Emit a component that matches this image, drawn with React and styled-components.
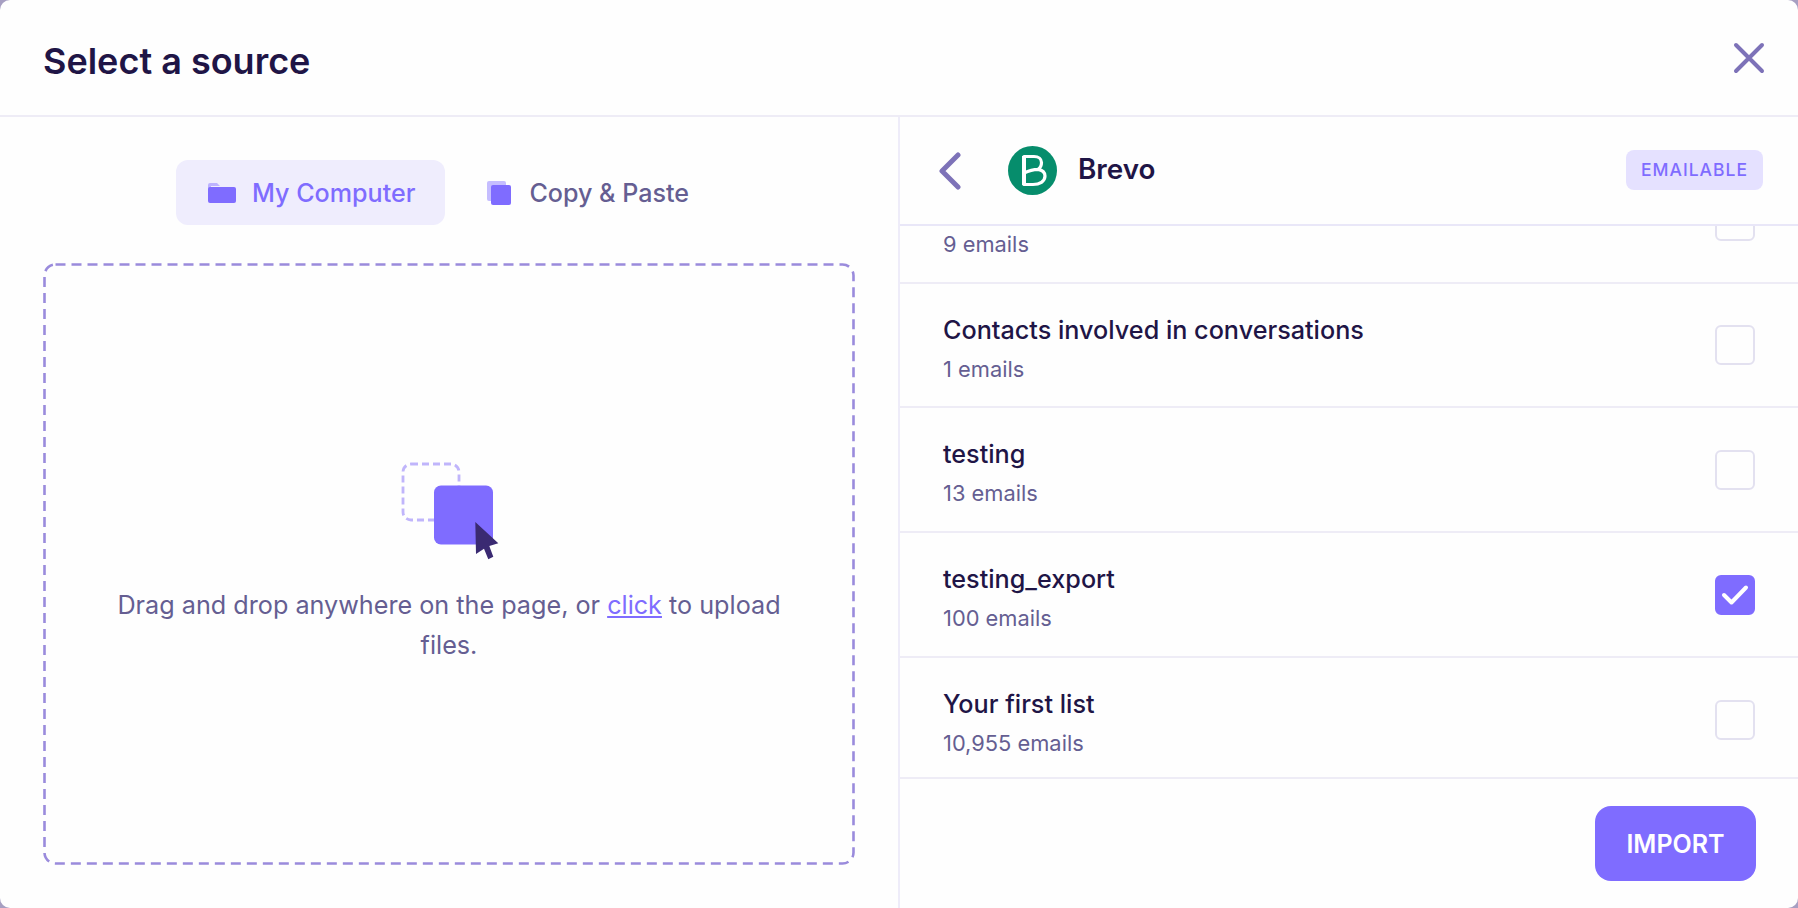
import styled, { createGlobalStyle } from 'styled-components';

const GlobalStyle = createGlobalStyle`
  html, body {
    margin: 0;
    padding: 0;
    background: #a79fc2;
  }
  * { box-sizing: border-box; }
`;

const lists = [
  { name: '\u00a0', count: '9 emails', height: 125, offset: -67 },
  { name: 'Contacts involved in conversations', count: '1 emails', height: 124 },
  { name: 'testing', count: '13 emails', height: 125 },
  { name: 'testing_export', count: '100 emails', height: 125, checked: true },
  { name: 'Your first list', count: '10,955 emails', height: 125 },
];

const Modal = styled.div`
  width: 1798px;
  height: 908px;
  display: flex;
  flex-direction: column;
  overflow: hidden;
  border-radius: 10px;
  background: #fefefe;
  font-family: Inter, "Liberation Sans", sans-serif;
  color: #1f1546;
`;

const Header = styled.header`
  height: 117px;
  flex: none;
  display: flex;
  align-items: center;
  justify-content: space-between;
  padding: 0 33px 0 43px;
  border-bottom: 2px solid #eeecf6;
`;

const Title = styled.h1`
  margin: 7px 0 0;
  font-size: 36px;
  font-weight: 600;
  line-height: 1;
`;

const CloseButton = styled.button`
  display: flex;
  padding: 0;
  border: 0;
  background: none;
`;

const Body = styled.div`
  flex: 1;
  min-height: 0;
  display: grid;
  grid-template-columns: 900px 1fr;
`;

const SourcePane = styled.section`
  display: flex;
  flex-direction: column;
  padding: 43px;
  border-right: 2px solid #eeecf9;
`;

const Tabs = styled.div`
  display: flex;
  justify-content: center;
  gap: 10px;
  height: 65px;
  flex: none;
  margin-bottom: 38px;
  padding-right: 3px;
`;

const Tab = styled.div`
  display: flex;
  align-items: center;
  gap: ${(p) => (p.$active ? '16px' : '18px')};
  padding: 0 30px 0 32px;
  border-radius: 12px;
  background: ${(p) => (p.$active ? '#efedfd' : 'transparent')};
  color: ${(p) => (p.$active ? '#7f6cff' : '#655e92')};
  font-size: 25.1px;
  font-weight: 500;
`;

const DropZone = styled.div`
  position: relative;
  flex: 1;
  display: flex;
  flex-direction: column;
  align-items: center;
  padding-top: 197px;
`;

const DashedFrame = styled.svg`
  position: absolute;
  inset: 0;
  width: 100%;
  height: 100%;
`;

const IconSlot = styled.div`
  display: flex;
  margin-left: 1px;
`;

const DropText = styled.p`
  margin: 25px 0 0;
  width: 700px;
  color: #655e92;
  font-size: 25.2px;
  line-height: 40px;
  text-align: center;
`;

const ClickLink = styled.a`
  color: #7f6cff;
  text-decoration: underline;
`;

const ListPane = styled.section`
  display: flex;
  flex-direction: column;
  min-height: 0;
`;

const ProviderBar = styled.div`
  height: 109px;
  flex: none;
  display: flex;
  align-items: center;
  padding: 0 35px 0 38px;
  border-bottom: 2px solid #e9e7f8;
`;

const BackButton = styled.button`
  display: flex;
  padding: 0;
  border: 0;
  background: none;
  margin-right: 46px;
`;

const ProviderName = styled.div`
  margin: 0 0 3px 21px;
  font-size: 27.8px;
  font-weight: 600;
`;

const Badge = styled.div`
  margin: 0 0 2px auto;
  width: 137px;
  height: 40px;
  display: flex;
  align-items: center;
  justify-content: center;
  border-radius: 8px;
  background: #e5e1ff;
  color: #7f6cff;
  font-size: 17.5px;
  font-weight: 500;
  letter-spacing: 1px;
`;

const ListScroll = styled.div`
  flex: 1;
  min-height: 0;
  overflow: hidden;
`;

const Row = styled.div`
  height: ${(p) => p.$height}px;
  margin-top: ${(p) => p.$offset || 0}px;
  display: flex;
  align-items: center;
  justify-content: space-between;
  padding: 0 43px;
  border-bottom: 2px solid #eeecf6;
`;

const RowText = styled.div`
  display: flex;
  flex-direction: column;
  gap: 8px;
  padding-top: 7px;
`;

const RowName = styled.div`
  font-size: 25.2px;
  font-weight: 500;
  line-height: 32px;
`;

const RowCount = styled.div`
  color: #655e92;
  font-size: 21.85px;
  line-height: 30px;
`;

const Checkbox = styled.div`
  width: 40px;
  height: 40px;
  flex: none;
  display: flex;
  align-items: center;
  justify-content: center;
  border-radius: 6px;
  border: 2px solid ${(p) => (p.$checked ? '#7f6cff' : '#e3e1f0')};
  background: ${(p) => (p.$checked ? '#7f6cff' : 'transparent')};
`;

const Footer = styled.div`
  height: 131px;
  flex: none;
  display: flex;
  justify-content: flex-end;
  align-items: flex-start;
  padding: 27px 42px 0 0;
  border-top: 2px solid #eeecf6;
`;

const ImportButton = styled.button`
  width: 161px;
  height: 75px;
  border: 0;
  border-radius: 16px;
  background: #7f6cff;
  color: #fff;
  font-family: inherit;
  font-size: 25px;
  font-weight: 600;
`;

const FolderIcon = () => (
  <svg width="28" height="20" viewBox="0 0 28 20">
    <path d="M0 2a2 2 0 0 1 2-2h7l3 3h-9v6H0z" fill="#bdb3ff" />
    <path d="M0 6a2 2 0 0 1 2-2h24a2 2 0 0 1 2 2v12a2 2 0 0 1-2 2H2a2 2 0 0 1-2-2z" fill="#7f6cff" />
  </svg>
);

const CopyIcon = () => (
  <svg width="24" height="24" viewBox="0 0 24 24">
    <rect x="0" y="0" width="19" height="20" rx="2" fill="#c5bdff" />
    <rect x="4" y="4" width="20" height="20" rx="2" fill="#7f6cff" />
  </svg>
);

const UploadIcon = () => (
  <svg width="100" height="100" viewBox="0 0 100 100">
    <rect x="3" y="4" width="56" height="56" rx="8" fill="none" stroke="#c0b5fb" strokeWidth="2.8" strokeDasharray="7 4" />
    <rect x="34" y="25.5" width="59" height="59" rx="7" fill="#7f6cff" />
    <path d="M75.3 62L98.3 83.3 89.3 86 93.3 96.7 88.3 99.3 84 88.7 76 94z" fill="#3a2a72" />
  </svg>
);

const BrevoLogo = () => (
  <svg width="49" height="49" viewBox="0 0 49 49">
    <circle cx="24.5" cy="24.5" r="24.5" fill="#068d6c" />
    <path
      d="M16 10.5V38.5H25C31.5 38.5 37 35.5 37 30C37 26.5 34 24 30 23.3C32.5 21.8 33.5 19.2 33.5 16.5C33.5 13 30.5 10.5 26 10.5zM16 27C20 25 25 23.3 30 23.3"
      fill="none"
      stroke="#fff"
      strokeWidth="3.2"
      strokeLinejoin="round"
    />
    <path d="M16 10V39" stroke="#fff" strokeWidth="4" />
  </svg>
);

const App = () => {
  return (
    <>
      <GlobalStyle />
      <Modal>
        <Header>
          <Title>Select a source</Title>
          <CloseButton>
            <svg width="32" height="32" viewBox="0 0 32 32">
              <path d="M3 3l26 26M29 3L3 29" stroke="#7d72b8" strokeWidth="4" strokeLinecap="round" />
            </svg>
          </CloseButton>
        </Header>
        <Body>
          <SourcePane>
            <Tabs>
              <Tab $active>
                <FolderIcon />
                My Computer
              </Tab>
              <Tab>
                <CopyIcon />
                Copy &amp; Paste
              </Tab>
            </Tabs>
            <DropZone>
              <DashedFrame>
                <rect
                  x="1.5"
                  y="1.5"
                  width="809"
                  height="599"
                  rx="11"
                  fill="none"
                  stroke="#9a8bdc"
                  strokeWidth="2.6"
                  strokeDasharray="10 6"
                />
              </DashedFrame>
              <IconSlot>
                <UploadIcon />
              </IconSlot>
              <DropText>
                Drag and drop anywhere on the page, or <ClickLink>click</ClickLink> to upload files.
              </DropText>
            </DropZone>
          </SourcePane>
          <ListPane>
            <ProviderBar>
              <BackButton>
                <svg width="24" height="38" viewBox="0 0 24 38">
                  <path d="M20 3L4 19l16 16" fill="none" stroke="#7d72b8" strokeWidth="5" strokeLinecap="round" strokeLinejoin="round" />
                </svg>
              </BackButton>
              <BrevoLogo />
              <ProviderName>Brevo</ProviderName>
              <Badge>EMAILABLE</Badge>
            </ProviderBar>
            <ListScroll>
              {lists.map((list) => (
                <Row key={list.count} $height={list.height} $offset={list.offset}>
                  <RowText>
                    <RowName>{list.name}</RowName>
                    <RowCount>{list.count}</RowCount>
                  </RowText>
                  <Checkbox $checked={list.checked}>
                    {list.checked && (
                      <svg width="28" height="22" viewBox="0 0 28 22">
                        <path d="M3 11l7.5 7.5L25 3.5" fill="none" stroke="#fff" strokeWidth="4" strokeLinecap="round" strokeLinejoin="round" />
                      </svg>
                    )}
                  </Checkbox>
                </Row>
              ))}
            </ListScroll>
            <Footer>
              <ImportButton>IMPORT</ImportButton>
            </Footer>
          </ListPane>
        </Body>
      </Modal>
    </>
  );
};

export default App;
